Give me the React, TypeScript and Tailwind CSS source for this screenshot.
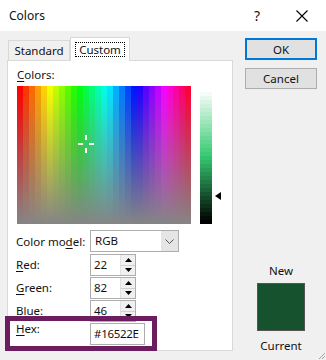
import React from "react";

function Spectrum() {
  const cols = Array.from({ length: 29 }, (_, i) => i);
  return (
    <svg width="174" height="138" className="block shrink-0">
      <defs>
        <linearGradient id="gray" x1="0" y1="0" x2="0" y2="1">
          <stop offset="0" stopColor="#808080" stopOpacity="0" />
          <stop offset="1" stopColor="#858585" stopOpacity="1" />
        </linearGradient>
      </defs>
      {cols.map((i) => (
        <rect key={i} x={i * 6} y={0} width={6.5} height={138} fill={`hsl(${(i * 360) / 29}, 100%, 50%)`} />
      ))}
      <rect x="0" y="0" width="174" height="138" fill="url(#gray)" />
      <g fill="#ffffff">
        <rect x="61" y="57" width="5" height="2" />
        <rect x="72" y="57" width="5" height="2" />
        <rect x="68" y="49" width="2" height="5" />
        <rect x="68" y="62" width="2" height="5" />
      </g>
    </svg>
  );
}

function LumBar() {
  const n = 34;
  const bands = Array.from({ length: n }, (_, i) => i);
  return (
    <svg width="22" height="138" className="block shrink-0">
      {bands.map((i) => (
        <rect
          key={i}
          x={0}
          y={2 + i * 4}
          width={12}
          height={4.5}
          fill={`hsl(144, 58%, ${100 - (i * 100) / (n - 1)}%)`}
        />
      ))}
      <polygon points="15,110 21,106 21,114" fill="#000" />
    </svg>
  );
}

function Spin({ value }: { value: string }) {
  return (
    <div className="flex h-[22px] w-[46px] border border-[#adadad] bg-white">
      <div className="flex-1 pl-[3px] leading-[20px]">{value}</div>
      <div className="flex w-[15px] flex-col border-l border-[#e0e0e0] bg-[#f0f0f0]">
        <div className="flex flex-1 items-center justify-center border-b border-[#d0d0d0]">
          <svg width="7" height="4"><polygon points="0,4 3.5,0 7,4" fill="#000" /></svg>
        </div>
        <div className="flex flex-1 items-center justify-center">
          <svg width="7" height="4"><polygon points="0,0 3.5,4 7,0" fill="#000" /></svg>
        </div>
      </div>
    </div>
  );
}

export default function App() {
  return (
    <div className="relative h-[360px] w-[326px] overflow-hidden bg-[#f0f0f0] font-['Noto_Sans',sans-serif] text-[11.5px] leading-[15px] text-[#111]">
      {/* title bar */}
      <div className="flex h-[31px] items-center bg-white">
        <span className="ml-[9px] text-[12px]">Colors</span>
        <span className="ml-auto w-[14px] text-center text-[14px]">?</span>
        <svg width="12" height="12" className="ml-[32px] mr-[18px]">
          <path d="M0.5 0.5 L11.5 11.5 M11.5 0.5 L0.5 11.5" stroke="#000" strokeWidth="1.1" />
        </svg>
      </div>

      <div className="flex">
        {/* left: tabs + panel */}
        <div className="ml-[7px] mt-[6px] w-[226px]">
          <div className="flex h-[23px] items-end pl-[1px]">
            <div className="flex h-[20px] w-[62px] items-center justify-center border border-b-0 border-[#d9d9d9] bg-[#f0f0f0]">
              Standard
            </div>
            <div className="relative z-10 -mb-[1px] flex h-[24px] w-[60px] items-center justify-center border border-b-0 border-[#d9d9d9] bg-white">
              <span className="border border-dotted border-black px-[3px] leading-[13px]">Custom</span>
            </div>
          </div>
          <div className="h-[291px] border border-[#d9d9d9] bg-white pl-[9px]">
            <div className="mt-[6px] h-[15px]">
              <span className="underline underline-offset-2">C</span>olors:
            </div>
            <div className="mt-[4px] flex">
              <Spectrum />
              <div className="ml-[9px]">
                <LumBar />
              </div>
            </div>

            <div className="mt-[6px] flex flex-col gap-[1px]">
              <div className="flex h-[22px] items-center">
                <span className="w-[74px] -ml-[1px]">
                  Color mo<span className="underline underline-offset-2">d</span>el:
                </span>
                <div className="flex h-[22px] w-[89px] border border-[#adadad] bg-white">
                  <div className="flex-1 pl-[4px] leading-[20px]">RGB</div>
                  <div className="flex w-[17px] items-center justify-center bg-[#e5e5e5]">
                    <svg width="9" height="5">
                      <path d="M0.5 0.5 L4.5 4.5 L8.5 0.5" stroke="#555" fill="none" strokeWidth="1" />
                    </svg>
                  </div>
                </div>
              </div>
              <div className="mt-[1px] flex h-[22px] items-center">
                <span className="-ml-[1px] -mt-[2px] w-[74px]">
                  <span className="underline underline-offset-2">R</span>ed:
                </span>
                <Spin value="22" />
              </div>
              <div className="flex h-[22px] items-center">
                <span className="-ml-[1px] -mt-[2px] w-[74px]">
                  <span className="underline underline-offset-2">G</span>reen:
                </span>
                <Spin value="82" />
              </div>
              <div className="flex h-[22px] items-center">
                <span className="-ml-[1px] -mt-[2px] w-[74px]">
                  <span className="underline underline-offset-2">B</span>lue:
                </span>
                <Spin value="46" />
              </div>
              <div className="flex h-[22px] items-start">
                <span className="-ml-[1px] -mt-[2px] w-[74px]">
                  <span className="underline underline-offset-2">H</span>ex:
                </span>
                <div className="h-[22px] w-[55px] border border-[#adadad] bg-white pl-[3px] leading-[20px] tracking-[-0.3px]">
                  #16522E
                </div>
              </div>
            </div>
          </div>
        </div>

        {/* right column */}
        <div className="ml-[12px] mt-[7px] flex w-[72px] flex-col items-center">
          <div className="flex h-[22px] w-[72px] items-center justify-center border-2 border-[#0078d7] bg-[#e1e1e1]">
            OK
          </div>
          <div className="mt-[8px] flex h-[21px] w-[72px] items-center justify-center border border-[#adadad] bg-[#e1e1e1]">
            Cancel
          </div>
          <div className="mt-[174px] h-[15px]">New</div>
          <div className="mt-[5px] h-[48px] w-[48px] border border-[#555] bg-[#16522e]" />
          <div className="mt-[7px] h-[15px]">Current</div>
        </div>
      </div>

      {/* highlight box */}
      <div className="absolute left-[5px] top-[316px] h-[35px] w-[152px] border-[5px] border-[#6b1d5f]" />

      {/* resize grip */}
      <svg width="8" height="8" className="absolute bottom-0 right-0">
        <path d="M7 1 L1 7 M7 4 L4 7" stroke="#a0a0a0" strokeWidth="1" />
      </svg>
    </div>
  );
}
